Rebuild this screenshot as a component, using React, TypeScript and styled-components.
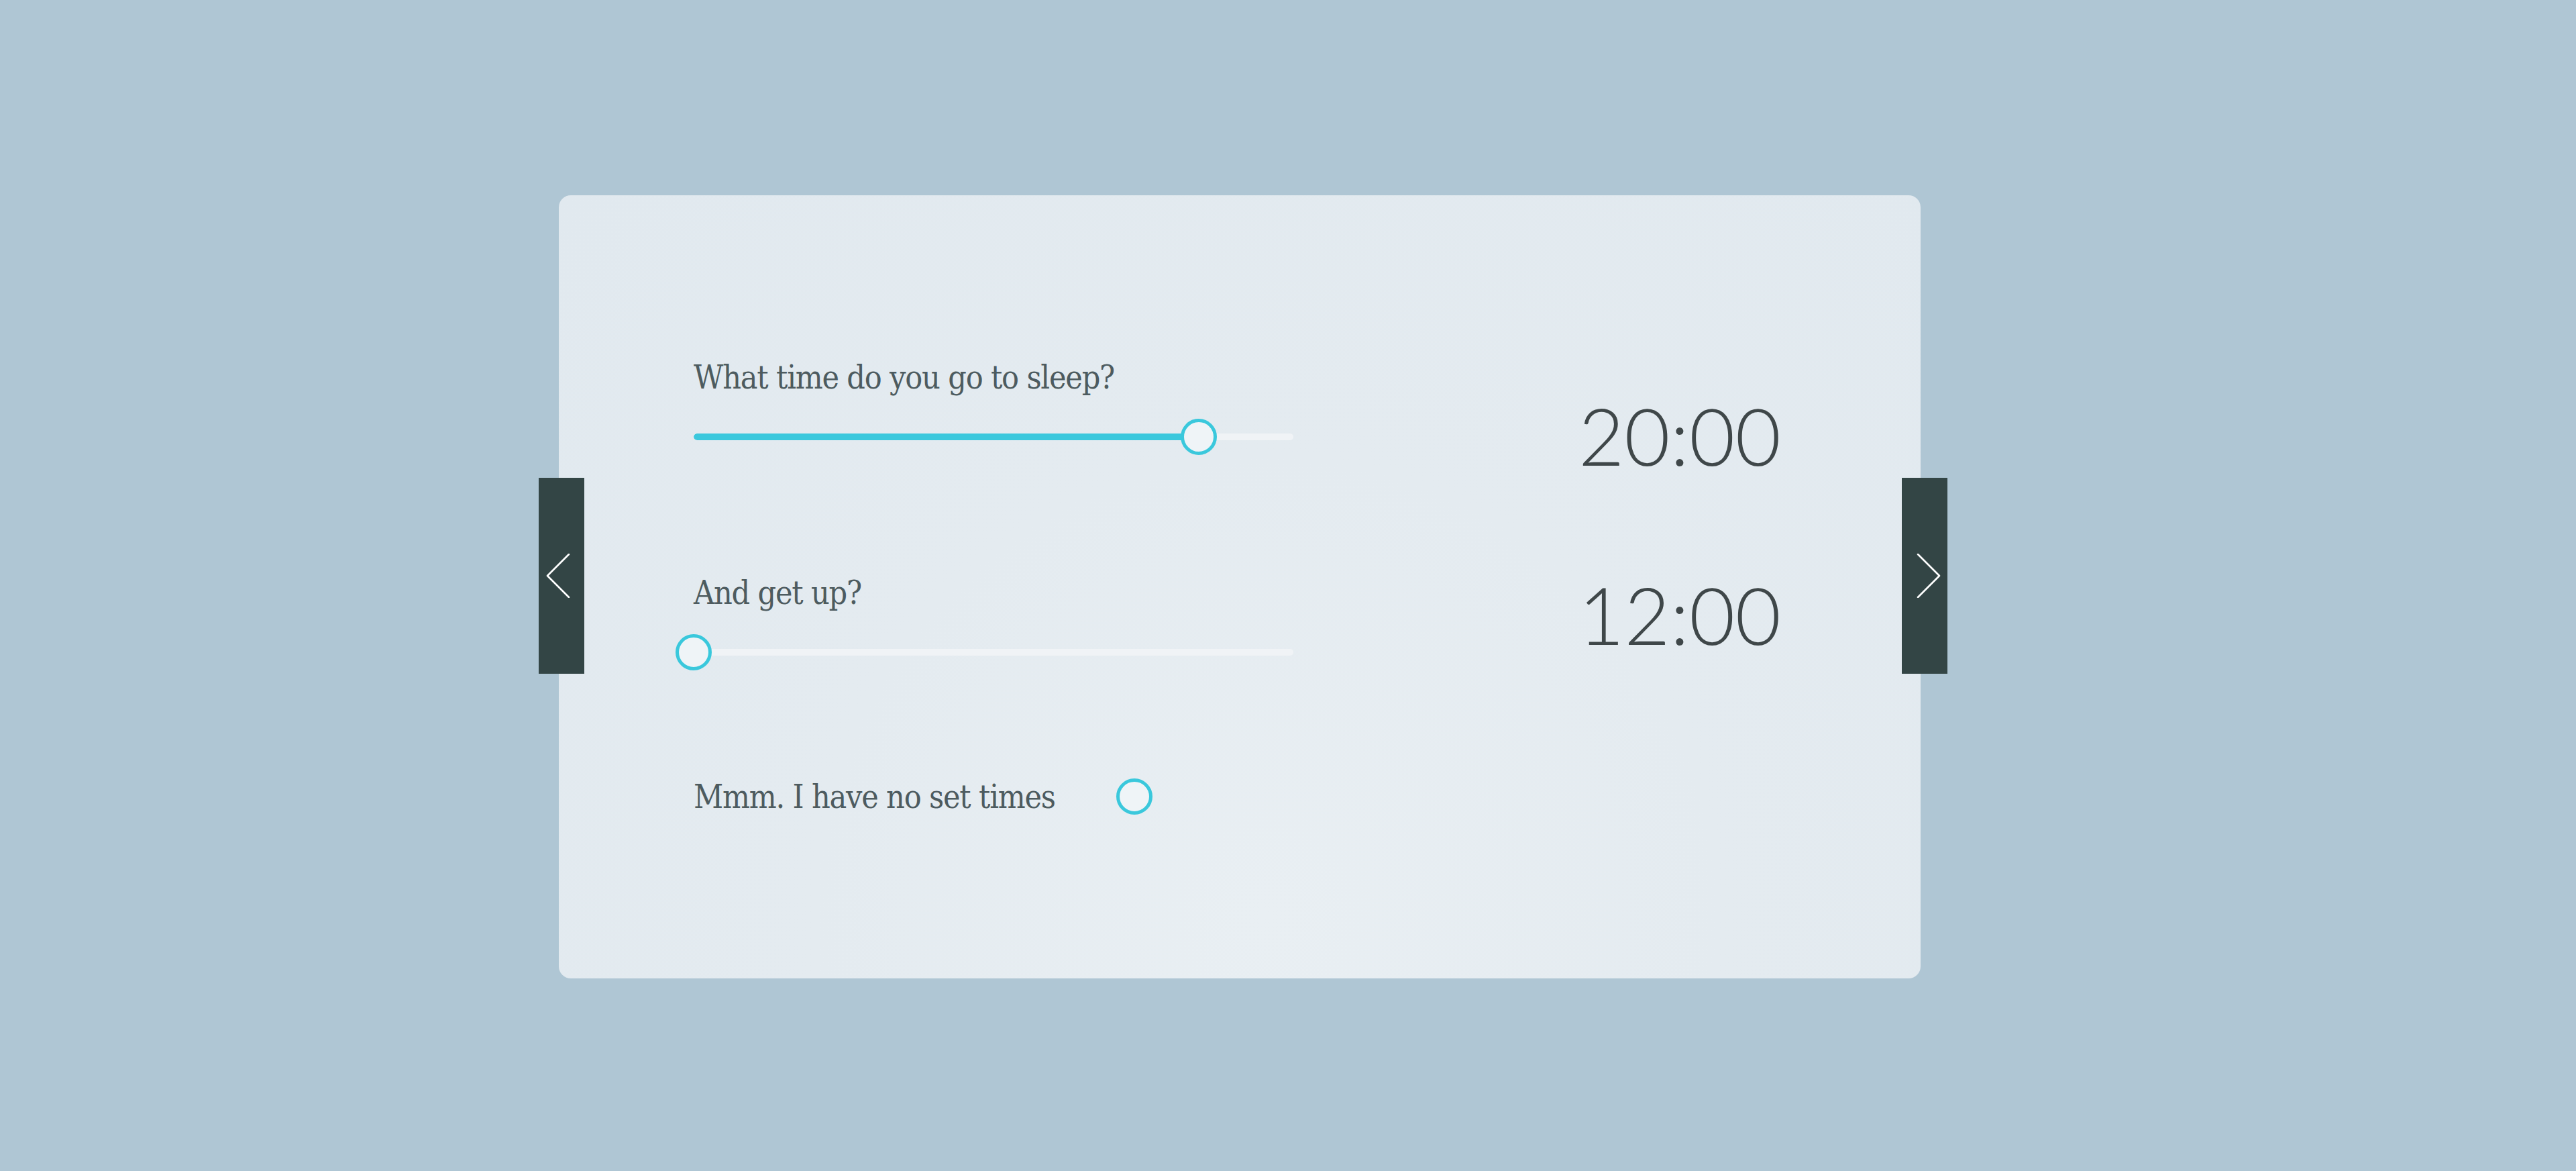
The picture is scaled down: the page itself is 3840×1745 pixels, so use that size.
import React, { FC } from 'react';
import styled, { createGlobalStyle } from 'styled-components';

const GlobalStyle = createGlobalStyle`
    html, body {
        margin: 0;
        padding: 0;
        background: #afc6d4;
    }
    body {
        width: 3840px;
        height: 1745px;
        overflow: hidden;
        font-family: 'DejaVu Serif', 'Liberation Serif', serif;
    }
`;

const Page = styled.div`
    padding: 291px 0 0 833px;
`;

const Card = styled.div`
    position: relative;
    box-sizing: border-box;
    width: 2030px;
    height: 1167px;
    padding: 243px 208px 0 201px;
    border-radius: 18px;
    background: radial-gradient(ellipse at 52% 92%, #e9eff3 0%, #e4ebf0 45%, #e1e9ef 100%);
`;

const Body = styled.div`
    display: grid;
    grid-template-columns: 894px 1fr;
`;

const Questions = styled.div`
    display: flex;
    flex-direction: column;
`;

const Question = styled.div<{ gap: number }>`
    display: flex;
    flex-direction: column;
    gap: 34px;
    margin-bottom: ${({ gap }) => gap}px;
`;

const Label = styled.div`
    font-family: 'DejaVu Serif', 'Liberation Serif', serif;
    font-stretch: condensed;
    font-size: 48px;
    line-height: 56px;
    color: #4d5b5f;
    white-space: nowrap;
    letter-spacing: -1.2px;
`;

const Track = styled.div`
    position: relative;
    height: 54px;
    display: flex;
    align-items: center;
`;

const Rail = styled.div`
    width: 100%;
    height: 10px;
    border-radius: 5px;
    background: #f0f3f6;
    overflow: hidden;
`;

const Fill = styled.div`
    height: 100%;
    border-radius: 5px;
    background: #3bc8dd;
`;

const Knob = styled.div`
    box-sizing: border-box;
    width: 54px;
    height: 54px;
    border-radius: 50%;
    border: 5px solid #3ac8dc;
    background: #eff4f7;
`;

const Thumb = styled(Knob)`
    position: absolute;
    top: 0;
    transform: translateX(-50%);
`;

const ToggleRow = styled.div`
    display: grid;
    grid-template-columns: 630px auto;
    align-items: center;
    height: 56px;
`;

const Values = styled.div`
    display: flex;
    flex-direction: column;
    align-items: flex-end;
    padding-top: 44px;
    gap: 125px;
`;

const Value = styled.div`
    font-family: Lato, 'Open Sans', sans-serif;
    font-weight: 300;
    font-size: 118px;
    line-height: 1.2;
    color: #3f4749;
    font-variant-numeric: tabular-nums;
`;

const NavButton = styled.button<{ side: 'left' | 'right' }>`
    position: absolute;
    top: 421px;
    ${({ side }) => (side === 'left' ? 'left: -30px;' : 'right: -40px;')}
    width: 68px;
    height: 292px;
    border: 0;
    padding: 0;
    padding-${({ side }) => (side === 'left' ? 'right' : 'left')}: 11px;
    background: #334545;
    display: flex;
    align-items: center;
    justify-content: center;
    cursor: pointer;
`;

const Chevron: FC<{ dir: 'left' | 'right' }> = ({ dir }) => (
    <svg width="36" height="66" viewBox="0 0 36 66">
        <polyline
            points={dir === 'left' ? '34,1 2,33 34,65' : '2,1 34,33 2,65'}
            fill="none"
            stroke="#ffffff"
            strokeWidth="2.6"
            strokeLinecap="round"
            strokeLinejoin="round"
        />
    </svg>
);

const Slider: FC<{ percent: number }> = ({ percent }) => (
    <Track>
        <Rail>
            <Fill style={{ width: `${percent}%` }} />
        </Rail>
        <Thumb style={{ left: `${percent}%` }} />
    </Track>
);

export default function App() {
    return (
        <Page>
            <GlobalStyle />
            <Card>
                <NavButton side="left" aria-label="previous">
                    <Chevron dir="left" />
                </NavButton>
                <NavButton side="right" aria-label="next">
                    <Chevron dir="right" />
                </NavButton>
                <Body>
                    <Questions>
                        <Question gap={177}>
                            <Label>What time do you go to sleep?</Label>
                            <Slider percent={84.2} />
                        </Question>
                        <Question gap={160}>
                            <Label>And get up?</Label>
                            <Slider percent={0} />
                        </Question>
                        <ToggleRow>
                            <Label>Mmm. I have no set times</Label>
                            <Knob />
                        </ToggleRow>
                    </Questions>
                    <Values>
                        <Value>20:00</Value>
                        <Value>12:00</Value>
                    </Values>
                </Body>
            </Card>
        </Page>
    );
}
